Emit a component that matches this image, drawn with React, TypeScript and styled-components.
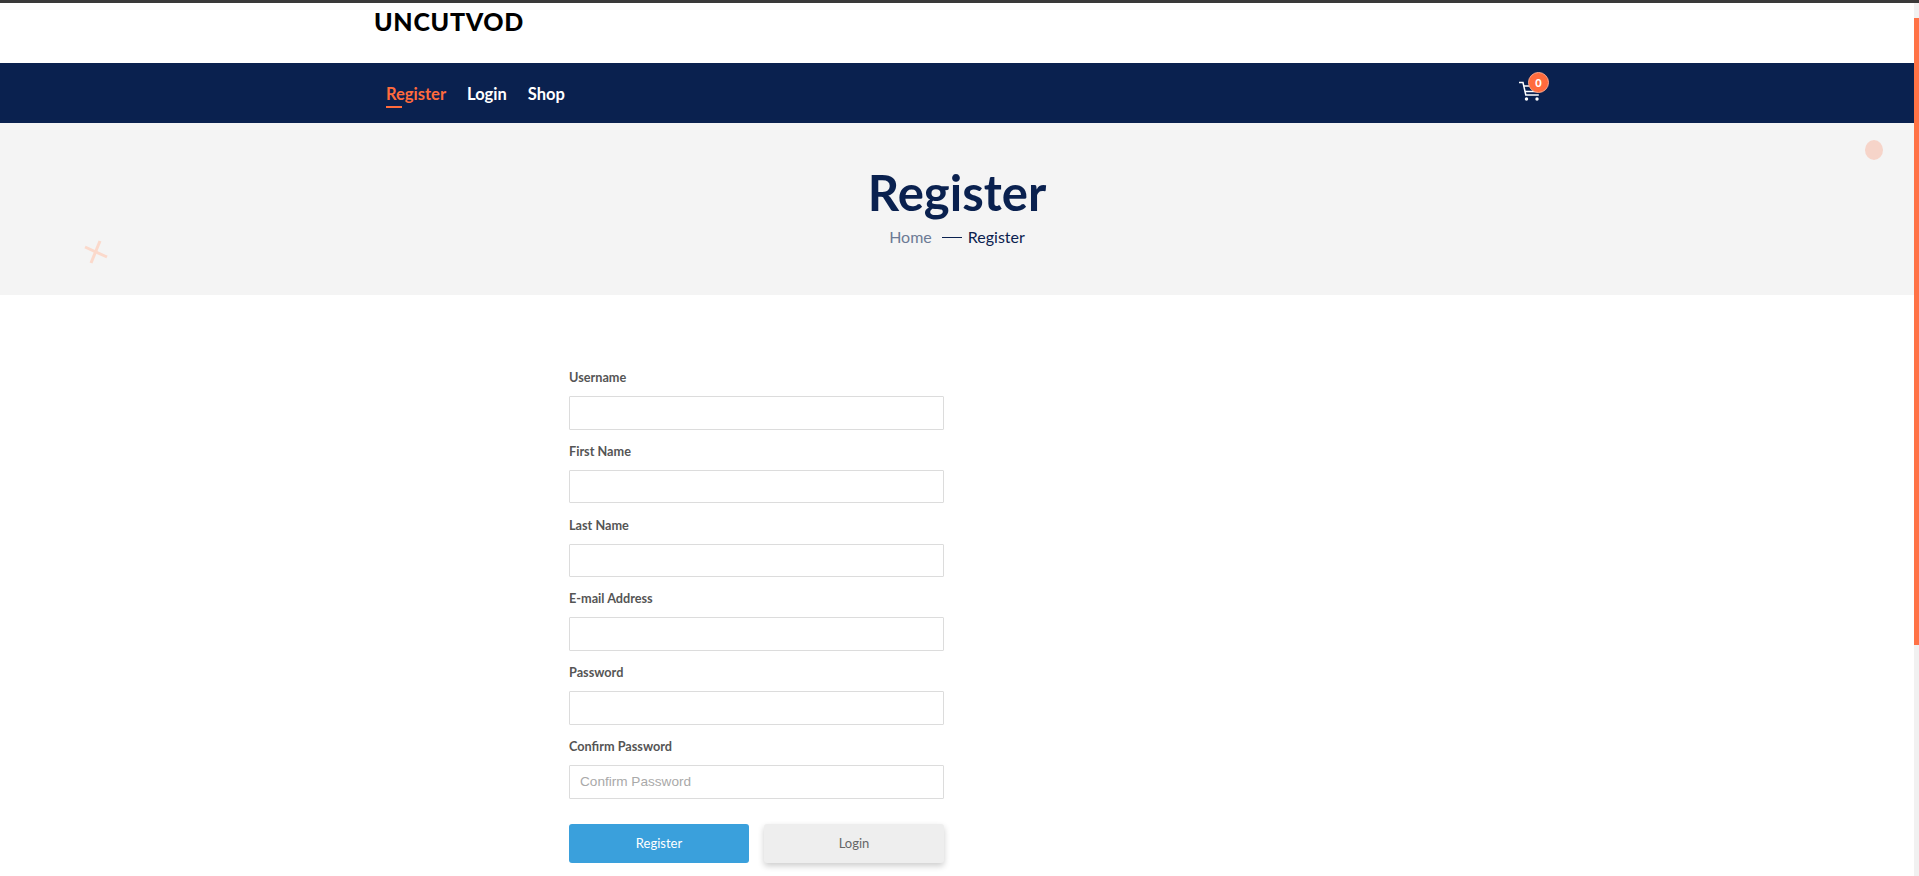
import React from "react";
import styled, { createGlobalStyle } from "styled-components";

const GlobalStyle = createGlobalStyle`
  html, body {
    margin: 0;
    padding: 0;
    height: 876px;
    overflow: hidden;
    background: #fff;
    font-family: "Lato", "Liberation Sans", sans-serif;
  }
  * { box-sizing: border-box; }
`;

const Page = styled.div`
  border-top: 3px solid #3a3a3a;
  height: 876px;
  overflow: hidden;
`;

const Scrollbar = styled.div`
  position: fixed;
  top: 3px;
  right: 0;
  width: 5px;
  height: 873px;
  background: #f1f1f1;
`;

const ScrollThumb = styled.div`
  margin-top: 15px;
  height: 627px;
  background: #ff7246;
`;

const TopBar = styled.header`
  height: 60px;
  padding: 4px 0 0 374px;
`;

const Logo = styled.div`
  font-size: 25px;
  line-height: 28px;
  font-weight: 900;
  letter-spacing: 0.7px;
  color: #000;
`;

const NavBar = styled.nav`
  height: 60px;
  background: #0a214f;
  display: flex;
  align-items: center;
  padding: 2px 0 0 386px;
`;

const NavLink = styled.a<{ $active?: boolean }>`
  position: relative;
  margin-right: 21px;
  font-size: 16.5px;
  font-weight: 700;
  color: ${(p) => (p.$active ? "#ff6b3d" : "#fff")};

  &::after {
    content: "";
    display: ${(p) => (p.$active ? "block" : "none")};
    position: absolute;
    left: 0;
    bottom: -4px;
    width: 16px;
    height: 2px;
    background: #ff6b3d;
  }
`;

const Cart = styled.div`
  position: absolute;
  left: 1519px;
  top: 81px;
  width: 21px;
  height: 21px;
`;

const CartBadge = styled.span`
  position: absolute;
  left: 9px;
  top: -9px;
  width: 21px;
  height: 21px;
  border-radius: 50%;
  background: #ff6b3d;
  border: 1px solid #ffa98c;
  color: #fff;
  font-size: 11px;
  font-weight: 900;
  display: flex;
  align-items: center;
  justify-content: center;
`;

const Banner = styled.section`
  position: relative;
  height: 172px;
  background: #f4f4f4;
  display: flex;
  flex-direction: column;
  align-items: center;
  padding: 44px 5px 0 0;
`;

const BannerTitle = styled.h1`
  margin: 0;
  font-size: 49px;
  line-height: 50px;
  font-weight: 700;
  color: #0a214f;
`;

const Breadcrumb = styled.div`
  display: flex;
  align-items: center;
  margin-top: 8px;
  font-size: 16px;
  line-height: 24px;
  color: #0a214f;
`;

const CrumbHome = styled.span`
  color: #6c7a95;
`;

const CrumbDash = styled.span`
  width: 20px;
  height: 1px;
  margin: 0 6px 0 10px;
  background: #0a214f;
`;

const Dot = styled.span`
  position: absolute;
  left: 1865px;
  top: 17px;
  width: 18px;
  height: 20px;
  border-radius: 50%;
  background: #f6d4c9;
`;

const Cross = styled.svg`
  position: absolute;
  left: 83px;
  top: 116px;
  width: 26px;
  height: 26px;
`;

const Main = styled.main`
  padding: 74px 0 0 569px;
`;

const Form = styled.form`
  width: 375px;
`;

const Field = styled.div`
  height: 73.8px;
`;

const Label = styled.label`
  display: block;
  height: 27px;
  font-size: 12.7px;
  line-height: 16px;
  font-weight: 700;
  color: #555;
`;

const Input = styled.input`
  display: block;
  width: 100%;
  height: 33.6px;
  padding: 0 10px;
  background: #fff;
  border: 1px solid #dcdcdc;
  border-radius: 1px;
  outline: none;
  font-family: "Liberation Sans", Arial, sans-serif;
  font-size: 13.6px;

  &::placeholder {
    color: #a9a9a9;
  }
`;

const Buttons = styled.div`
  display: flex;
  gap: 15px;
  margin-top: 12px;
`;

const Button = styled.button<{ $primary?: boolean }>`
  width: 180px;
  height: 39px;
  border: 0;
  border-radius: 3px;
  font-family: inherit;
  font-size: 13px;
  background: ${(p) => (p.$primary ? "#3aa0dc" : "#eeeeee")};
  color: ${(p) => (p.$primary ? "#fff" : "#666")};
  box-shadow: ${(p) => (p.$primary ? "none" : "0 3px 6px rgba(0, 0, 0, 0.2)")};
`;

const fields = ["Username", "First Name", "Last Name", "E-mail Address", "Password"];

export default function App() {
  return (
    <Page>
      <GlobalStyle />
      <TopBar>
        <Logo>UNCUTVOD</Logo>
      </TopBar>
      <NavBar>
        <NavLink $active>Register</NavLink>
        <NavLink>Login</NavLink>
        <NavLink>Shop</NavLink>
        <Cart>
          <svg width="21" height="21" viewBox="0 0 21 21" fill="none" stroke="#fff" strokeWidth="1.5">
            <path d="M0 1.5h4l2.8 12.5h13" />
            <path d="M4.8 5h15l-1 5.5H6" />
            <circle cx="7.5" cy="18" r="1.7" fill="#fff" stroke="none" />
            <circle cx="18" cy="18" r="1.7" fill="#fff" stroke="none" />
          </svg>
          <CartBadge>0</CartBadge>
        </Cart>
      </NavBar>
      <Banner>
        <Dot />
        <Cross viewBox="0 0 26 26" stroke="#fbd9cb" strokeWidth="3">
          <path d="M2 8l22 10" />
          <path d="M8 24L17 2" />
        </Cross>
        <BannerTitle>Register</BannerTitle>
        <Breadcrumb>
          <CrumbHome>Home</CrumbHome>
          <CrumbDash />
          Register
        </Breadcrumb>
      </Banner>
      <Main>
        <Form>
          {fields.map((name) => (
            <Field key={name}>
              <Label>{name}</Label>
              <Input type="text" />
            </Field>
          ))}
          <Field>
            <Label>Confirm Password</Label>
            <Input type="text" placeholder="Confirm Password" />
          </Field>
          <Buttons>
            <Button type="button" $primary>Register</Button>
            <Button type="button">Login</Button>
          </Buttons>
        </Form>
      </Main>
      <Scrollbar>
        <ScrollThumb />
      </Scrollbar>
    </Page>
  );
}
